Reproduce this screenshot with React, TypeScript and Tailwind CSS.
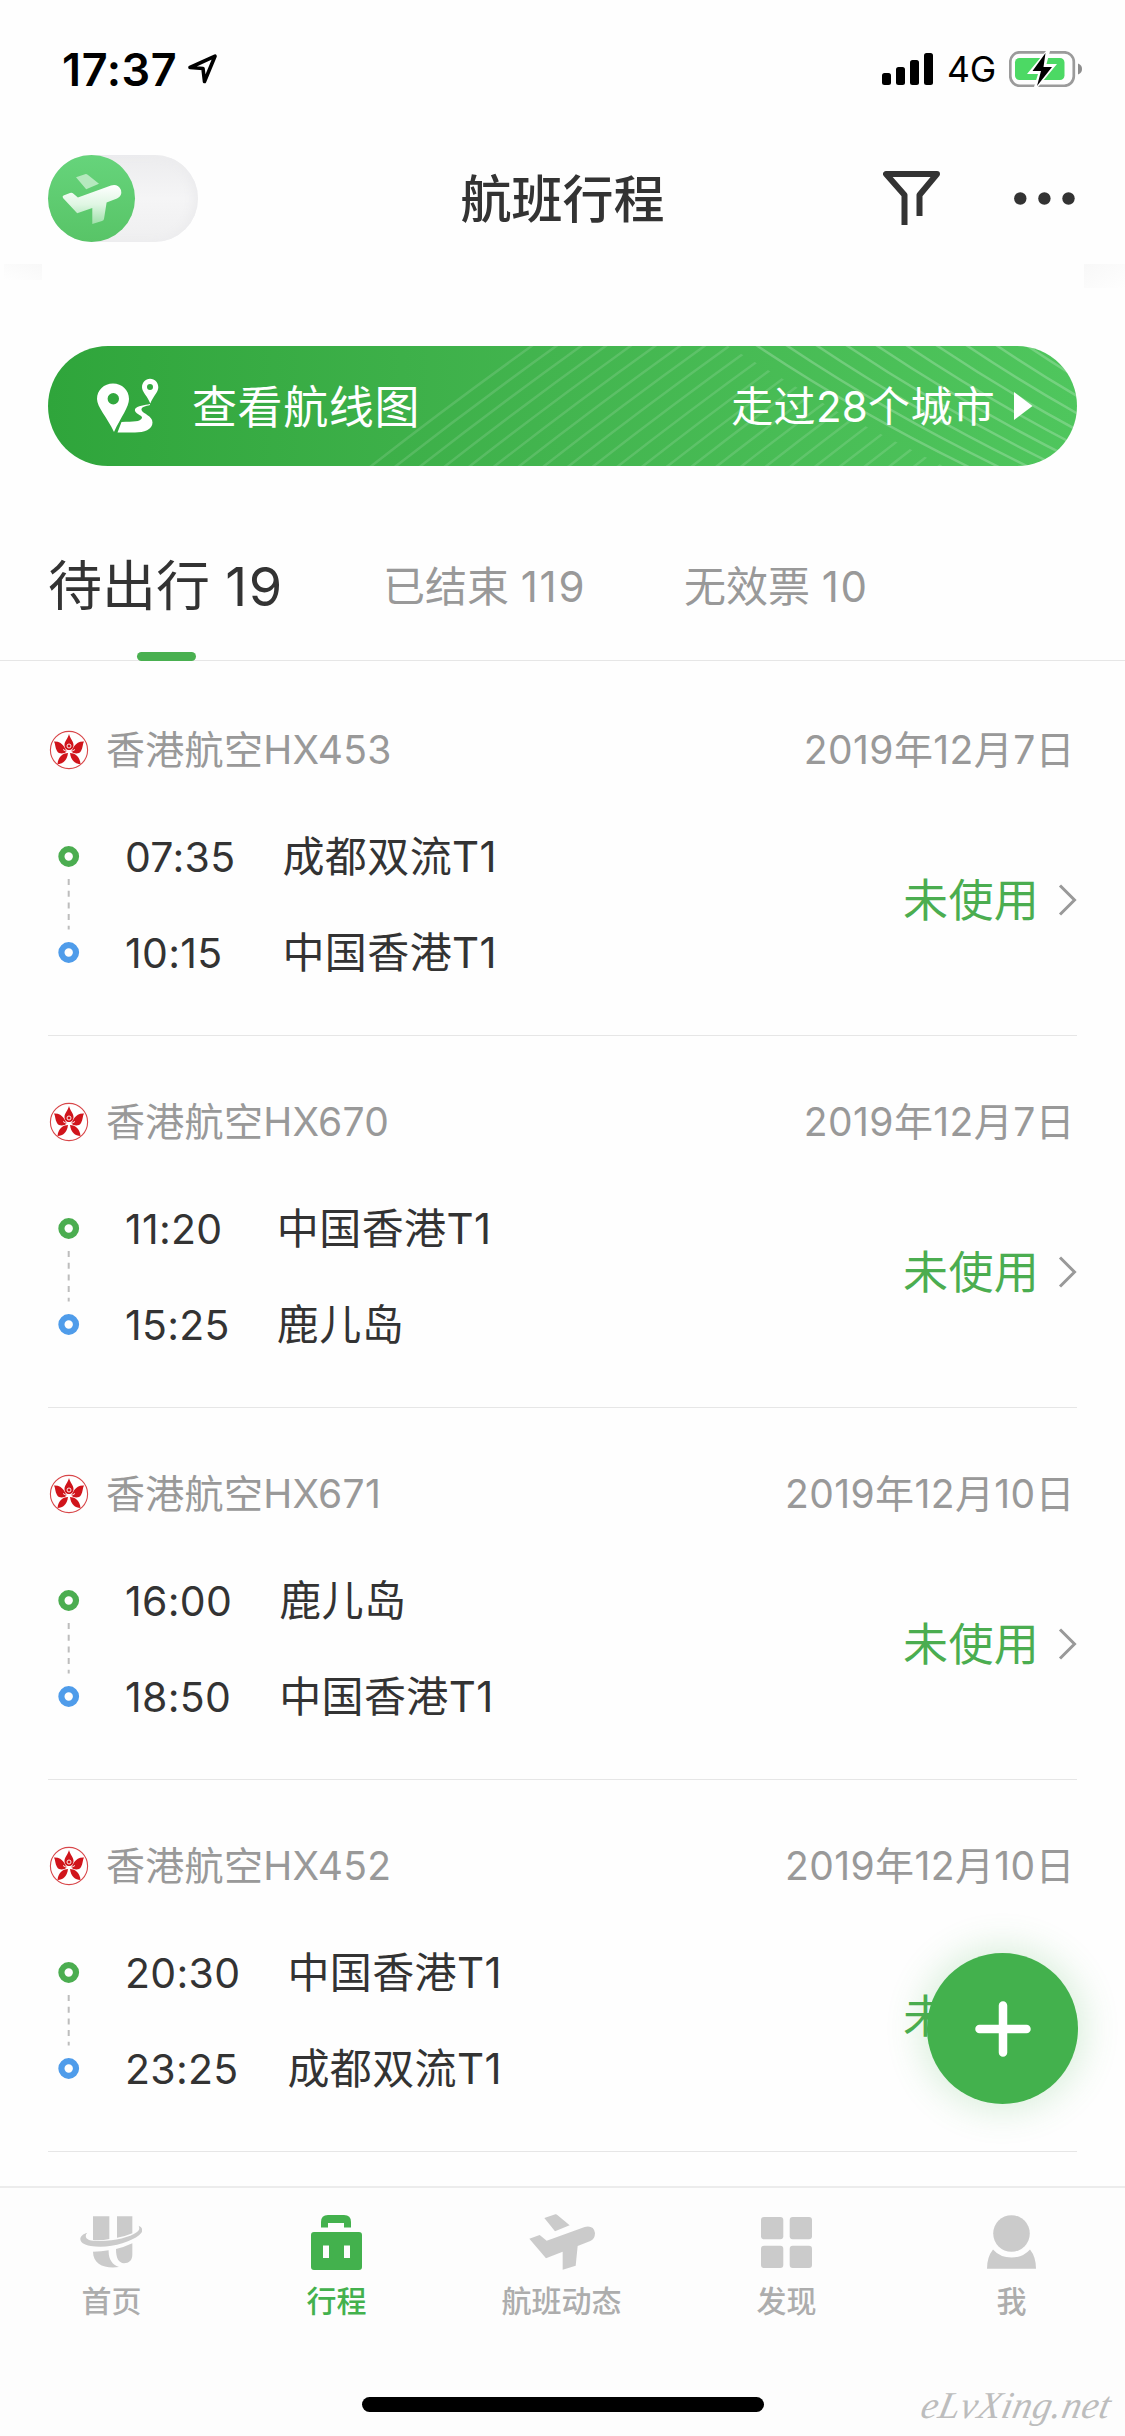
import type { ReactNode } from "react"
import clsx from "clsx"

const FONT = "font-['Inter','Noto_Sans_CJK_SC',sans-serif]"

interface Flight {
  no: string
  date: string
  depart: string
  from: string
  arrive: string
  to: string
}

const flights: Flight[] = [
  { no: "HX453", date: "2019年12月7日", depart: "07:35", from: "成都双流T1", arrive: "10:15", to: "中国香港T1" },
  { no: "HX670", date: "2019年12月7日", depart: "11:20", from: "中国香港T1", arrive: "15:25", to: "鹿儿岛" },
  { no: "HX671", date: "2019年12月10日", depart: "16:00", from: "鹿儿岛", arrive: "18:50", to: "中国香港T1" },
  { no: "HX452", date: "2019年12月10日", depart: "20:30", from: "中国香港T1", arrive: "23:25", to: "成都双流T1" },
]

function StatusBar() {
  return (
    <div className="flex h-[138px] items-center justify-between pl-[62px] pr-[42px]">
      <div className="flex items-center">
        <span className="w-[114px] whitespace-nowrap text-[45px] font-semibold leading-none tracking-[0.6px] text-black">17:37</span>
        <svg className="ml-3 h-[30px] w-[30px]" viewBox="0 0 30 30" fill="none" stroke="#000" strokeWidth="3.6" strokeLinejoin="round">
          <path d="M2 13.5 27 2.200 16.500 27.500 15 14.500Z" />
        </svg>
      </div>
      <div className="flex items-center">
        <svg className="h-[32px] w-[51px]" viewBox="0 0 51 32">
          <rect x="0" y="20" width="9" height="12" rx="2.500" />
          <rect x="14" y="14" width="9" height="18" rx="2.500" />
          <rect x="28" y="7" width="9" height="25" rx="2.500" />
          <rect x="42" y="0" width="9" height="32" rx="2.500" />
        </svg>
        <span className="ml-[14px] w-[50px] whitespace-nowrap pt-0.5 text-[35.500px] leading-none tracking-[-0.2px] text-black">4G</span>
        <svg className="ml-3 h-[36px] w-[74px]" viewBox="0 0 74 36">
          <rect x="1.300" y="1.300" width="63.500" height="33.500" rx="9.500" fill="none" stroke="#9b9b9b" strokeWidth="2.700" />
          <path d="M69 12.500c3 1 4 3 4 5.500s-1 4.500-4 5.500Z" fill="#8d8d8d" />
          <rect x="6" y="7" width="49.500" height="22" rx="4.500" fill="#4cd964" />
          <path d="M37 0 18 23h11l-4 13h4L48 13H37.500L41 0Z" fill="#fff" />
          <path d="M36.500 2 23.500 20h8.500l-4 15L43 16h-8.500Z" fill="#000" />
        </svg>
      </div>
    </div>
  )
}

function Header() {
  return (
    <div className="grid h-[126px] grid-cols-[1fr_auto_1fr] items-start px-12 pt-[17px]">
      <div className="h-[87px] w-[150px] rounded-full bg-linear-to-b from-[#ececee] via-[#f5f5f6] to-[#efeff0] shadow-[inset_-5px_0_10px_#ececee]">
        <div className="h-[87px] w-[87px] rounded-full bg-linear-to-b from-[#66d47b] to-[#58c467]">
          <svg className="h-[87px] w-[87px]" viewBox="0 0 87 87">
            <defs>
              <linearGradient id="jet" x1="0" y1="0" x2="0" y2="1">
                <stop offset="0" stopColor="#fff" />
                <stop offset="0.5" stopColor="#dff6e3" />
                <stop offset="1" stopColor="#9fe0aa" />
              </linearGradient>
            </defs>
            <path d="M28 22.300 37 19.200q1.500-.5 3 .7L51 28.700 38.200 34.300Z" fill="#b5e9be" />
            <path
              d="M15.500 40.500 22 38q2-.8 3.500.8l4.400 3.700L63 30.500q7-2 10 4.500 1.500 6-4 8.500l-10.400 4L56 64q-.3 1.500-2 2l-9.700 3V53L29.200 58.300 15 43Q14 41.200 15.500 40.500Z"
              fill="url(#jet)"
            />
          </svg>
        </div>
      </div>
      <h1 className="pt-[15px] text-[51px] font-medium leading-[60px] text-[#333]">航班行程</h1>
      <div className="flex items-start justify-end">
        <svg className="mt-4 h-[55px] w-[57px]" viewBox="0 0 57 55" fill="none" stroke="#333" strokeWidth="6" strokeLinejoin="round">
          <path d="M21.500 54V24L3 3h51L36.500 24v21" />
        </svg>
        <svg className="ml-[74px] mr-0.5 mt-[37px] h-[13px] w-[61px]" viewBox="0 0 61 13" fill="#333">
          <circle cx="6.300" cy="6.500" r="6.200" />
          <circle cx="30.400" cy="6.500" r="6.200" />
          <circle cx="54.500" cy="6.500" r="6.200" />
        </svg>
      </div>
    </div>
  )
}

function RouteBanner() {
  return (
    <div className="relative mx-12 flex h-[120px] items-center overflow-hidden rounded-full bg-linear-to-r from-[#2fa53b] via-[#43b54f] to-[#4fc65d] text-white">
      <svg className="absolute inset-0 h-full w-full" viewBox="0 0 1029 120" fill="none" stroke="#fff" strokeWidth="2.500">
        <defs>
          <clipPath id="rising">
            <path d="M300 0H680L790 66 895 120H300Z" />
          </clipPath>
        </defs>
        <g clipPath="url(#rising)" strokeOpacity="0.13">
          {Array.from({ length: 24 }, (_, i) => (
            <path key={i} d={`M${322 + i * 24.7} 121Q${400 + i * 24.7} 60 ${485 + i * 24.7} -1`} />
          ))}
        </g>
        <g strokeOpacity="0.22">
          {Array.from({ length: 11 }, (_, i) => (
            <path key={i} d={`M${708 + i * 30} -1Q${808 + i * 30} 66 ${921 + i * 30} 121`} />
          ))}
        </g>
      </svg>
      <svg className="relative ml-[49px] h-[56px] w-[62px]" viewBox="0 0 62 56">
        <path
          fillRule="evenodd"
          d="M16 5.500C25 5.500 32 12 32 21c0 8-8 18-15 33C10 39 0 29 0 21 0 12 7 5.500 16 5.500Zm.3 9.500a5.700 5.700 0 1 0 0 11.400 5.700 5.700 0 0 0 0-11.400Z"
          fill="#fff"
        />
        <path
          fillRule="evenodd"
          d="M53 .8c5 0 8.300 4 8.300 8.400 0 5-5.300 9-8 16.300C50.500 18 45 14 45 9.200 45 4.800 48.500.8 53 .8Zm0 5.200a3 3 0 1 0 0 6 3 3 0 0 0 0-6Z"
          fill="#fff"
        />
        <path d="M53 26c-5 1-13 2-15 5-1.500 5 8 6 7 9-2 4-8 3.500-20.500 4L20.500 54.500H38c9 0 17.500-3 17.500-10 0-7-9.500-8.500-11-12.500C44 29 49 28 53 27Z" fill="#fff" />
      </svg>
      <span className="relative ml-[33px] pt-0.5 text-[45px] font-[390] leading-none tracking-[0.6px]">查看航线图</span>
      <span className="relative ml-auto pt-0.5 text-[42px] font-[390] leading-none tracking-[0.3px]">走过28个城市</span>
      <svg className="relative ml-[19px] mr-[44px] h-[28px] w-[19px]" viewBox="0 0 19 28">
        <path d="M0 0 18.500 14 0 28Z" fill="#fff" />
      </svg>
    </div>
  )
}

function Tabs() {
  return (
    <div className="h-[195px] border-b border-[#e6e6e6] pl-12">
      <div className="flex items-start pt-[85px] font-[390] leading-[72px]">
        <div className="relative w-[335px] text-[54px] text-[#333]">
          待出行 <span className="tracking-[1.500px]">19</span>
          <i className="absolute left-[89px] top-[101px] h-[9px] w-[59px] rounded-full bg-[#49b050]" />
        </div>
        <div className="w-[301px] text-[42px] text-[#999]">
          已结束 <span className="tracking-[1.700px]">119</span>
        </div>
        <div className="text-[42px] text-[#999]">
          无效票 <span className="tracking-[1.500px]">10</span>
        </div>
      </div>
    </div>
  )
}

// Bauhinia roundel of Hong Kong Airlines
function AirlineLogo() {
  return (
    <svg className="ml-px h-[40px] w-[40px]" viewBox="-20 -20 40 40">
      <circle r="18.600" fill="#fff" stroke="#d8474a" strokeWidth="1.100" />
      <g fill="#d0141b">
        <path d="M0-16C1-11.500 4.500-9 4.500-5c0 3-2 5-4.500 5s-4.500-2-4.500-5C-4.500-9-1-11.500 0-16Z" />
        <path d="M2 1.500C4-.5 5.500-9 15-8.500c-1.500 2.500-1 6-3 9.500C10 4.500 5 4 2 1.500Z" />
        <path d="M-2 1.500C-4-.5-5.500-9-15-8.500c1.500 2.500 1 6 3 9.500C-10 4.500-5 4-2 1.500Z" />
        <path d="M1 3C5 3 11 6 11.500 14 6 14 2 10.500 1 3Z" />
        <path d="M-1 3C-5 3-11 6-11.500 14-6 14-2 10.500-1 3Z" />
      </g>
      <g fill="none" stroke="#fff" strokeWidth="0.900">
        <path d="M-6-.5Q0 4 6-.5" />
        <circle cy="-4" r="2" />
      </g>
    </svg>
  )
}

function FlightRow({ flight }: { flight: Flight }) {
  return (
    <div className="mx-12 h-[372px] border-b border-[#e6e6e6] pt-[56px] font-[390]">
      <div className="flex h-[60px] items-center text-[39px] leading-[60px] text-[#999]">
        <AirlineLogo />
        <span className="ml-[17px] tracking-[0.3px]">香港航空{flight.no}</span>
        <span className="ml-auto mr-0.5 tracking-[0.4px]">{flight.date}</span>
      </div>
      <div className="flex items-center pt-[29px]">
        <svg className="ml-[10px] h-[120px] w-[22px]" viewBox="0 0 22 120" fill="none">
          <circle cx="10.700" cy="11.500" r="7.300" stroke="#4bad50" strokeWidth="6.200" />
          <path d="M10.700 34V84.500" stroke="#bdbdbd" strokeWidth="2" strokeDasharray="6 5.700" />
          <circle cx="10.700" cy="107.500" r="7.300" stroke="#4f9cea" strokeWidth="6.200" />
        </svg>
        <div className="ml-[45px] grid grid-cols-[auto_auto] gap-x-[47px] text-[42px] leading-[96px] text-[#333]">
          <span className="text-[41px] tracking-[0.300px]">{flight.depart}</span>
          <span className="tracking-[0.4px]">{flight.from}</span>
          <span className="text-[41px] tracking-[0.300px]">{flight.arrive}</span>
          <span className="tracking-[0.4px]">{flight.to}</span>
        </div>
        <span className="mb-[9px] ml-auto text-[45px] leading-none tracking-[0.3px] text-[#4bad50]">未使用</span>
        <svg className="mb-[11px] ml-[18px] h-[32px] w-[20px]" viewBox="0 0 20 32" fill="none" stroke="#999" strokeWidth="3">
          <path d="M3 1.500 17.500 16 3 30.500" />
        </svg>
      </div>
    </div>
  )
}

function NavItem({ label, active, children }: { label: string; active?: boolean; children: ReactNode }) {
  return (
    <div className={clsx("flex w-[225px] flex-col items-center pr-[2px] pt-[25px]", active ? "text-[#43b14d]" : "text-[#cbcbcb]")}>
      <div className="flex h-[58px] items-center justify-center">{children}</div>
      <span className={clsx("mt-[10px] text-[30px] font-medium leading-[40px]", !active && "text-[#adadad]")}>{label}</span>
    </div>
  )
}

function BottomNav() {
  return (
    <nav className="relative h-[250px] border-t-2 border-[#ececec] bg-[#fdfdfd]">
      <div className="flex">
        <NavItem label="首页">
          <svg className="mr-0.5 h-[52px] w-[62px]" viewBox="120 108 186 156" fill="currentColor">
            <path d="M159 109h49v68q-23 5-49 3ZM231 109h46v51q-20 9-46 13Z" />
            <path d="M142 158c-10 10-4 22 17 24 50 5 108-8 131-25 9-7 9-12 6-20 14 6 14 19 2 28-30 24-94 42-146 33-40-7-39-32-10-40Z" />
            <path d="M159 215q25 0 47-4c-1 26 10 42 31 50-42 6-78-8-78-46ZM228 207q26-6 49-17v33c0 19-10 27-25 27-16-2-24-15-24-43Z" />
          </svg>
        </NavItem>
        <NavItem label="行程" active>
          <svg className="h-[55px] w-[51px]" viewBox="0 0 51 55" fill="currentColor">
            <path d="M10 12.500V7q0-7 7-7h16q7 0 7 7v5.500h-7V8H17v4.500Z" />
            <path fillRule="evenodd" d="M3 17h45q3 0 3 3v32q0 3-3 3H3q-3 0-3-3V20q0-3 3-3Zm9 13.500v12.500h6V30.500Zm21 0v12.500h6V30.500Z" />
          </svg>
        </NavItem>
        <NavItem label="航班动态">
          <svg className="h-[56px] w-[66px]" viewBox="178 103 198 168" fill="currentColor">
            <path d="M224 115 257 104Q260 103 263 106L300 137 256 155Z" />
            <path d="M179 177 210 166 231 183 345 142Q372 136 376 160 376 178 362 184L324 199 318 258 279 270V216L229 236Z" />
          </svg>
        </NavItem>
        <NavItem label="发现">
          <svg className="h-[51px] w-[51px]" viewBox="0 0 51 51" fill="currentColor">
            <rect width="22.300" height="22.300" rx="3" />
            <rect x="28.700" width="22.300" height="22.300" rx="3" />
            <rect y="28.700" width="22.300" height="22.300" rx="3" />
            <rect x="28.700" y="28.700" width="22.300" height="22.300" rx="3" />
          </svg>
        </NavItem>
        <NavItem label="我">
          <svg className="h-[54px] w-[49px]" viewBox="0 0 49 54" fill="currentColor">
            <circle cx="24.500" cy="18.500" r="18.300" />
            <path d="M6 34.500Q13 42.500 24.500 42.500T43 34.500Q49 42 49 53.700H0Q0 42 6 34.500Z" />
          </svg>
        </NavItem>
      </div>
      <div className="mx-auto mt-[76px] h-[15px] w-[402px] rounded-full bg-black" />
      <span className="absolute bottom-[12px] right-[14px] -skew-x-12 font-['Liberation_Serif',serif] text-[38px] italic leading-none tracking-[0.6px] text-[#bdbdbd]">
        eLvXing.net
      </span>
    </nav>
  )
}

export default function App() {
  return (
    <div className={clsx("relative flex h-[2436px] w-[1125px] flex-col overflow-hidden bg-[#fefefe]", FONT)}>
      <StatusBar />
      <Header />
      <div className="flex h-[82px] justify-between">
        <i className="ml-1 h-4 w-[38px] bg-linear-to-tr from-[#fefefe] to-[#f8f8f8]" />
        <i className="h-6 w-[41px] bg-linear-to-br from-[#f8f8f8] to-[#fefefe]" />
      </div>
      <RouteBanner />
      <Tabs />
      <div className="h-[1525px] overflow-hidden pt-[3px]">
        {flights.map((flight) => (
          <FlightRow key={flight.no} flight={flight} />
        ))}
      </div>
      <BottomNav />
      <button className="absolute left-[927px] top-[1953px] flex h-[151px] w-[151px] items-center justify-center rounded-full bg-[#43b14d] shadow-[0_0_36px_6px_rgba(67,177,77,0.2)]">
        <svg className="h-[56px] w-[56px]" viewBox="0 0 56 56" stroke="#fff" strokeWidth="8.500" strokeLinecap="round">
          <path d="M28 4.500v47M4.500 28h47" />
        </svg>
      </button>
    </div>
  )
}
